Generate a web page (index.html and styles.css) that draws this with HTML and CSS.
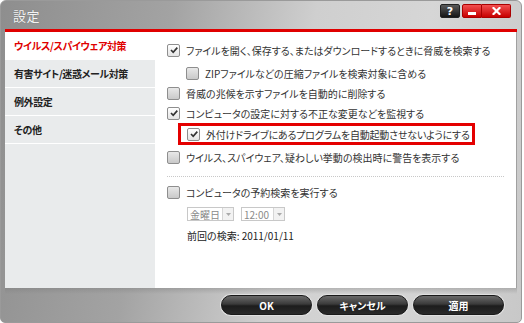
FILE: index.html
```html
<!DOCTYPE html>
<html lang="ja">
<head>
<meta charset="utf-8">
<link rel="stylesheet" href="styles.css">
</head>
<body>
<div class="window">
  <div class="titlebar">
    <span class="title">設定</span>
    <div class="controls">
      <span class="ctl help">?</span>
      <span class="ctl min"><span class="dash"></span></span>
      <span class="ctl close">
        <svg width="9" height="8" viewBox="0 0 9 8"><path d="M1.5 1 L7.5 7 M7.5 1 L1.5 7" stroke="#fff" stroke-width="2.2" stroke-linecap="square"/></svg>
      </span>
    </div>
  </div>
  <div class="redline"></div>
  <div class="main">
    <nav class="sidebar">
      <div class="nav-item active">ウイルス/スパイウェア対策</div>
      <div class="nav-item">有害サイト/迷惑メール対策</div>
      <div class="nav-item">例外設定</div>
      <div class="nav-item">その他</div>
    </nav>
    <section class="content">
      <div class="row r1"><span class="cb checked"><svg width="10" height="10" viewBox="0 0 10 10"><path d="M2 5 L4.2 7.3 L8.3 2.6" fill="none" stroke="#333" stroke-width="1.7"/></svg></span>ファイルを開く、保存する、またはダウンロードするときに脅威を検索する</div>
      <div class="row r2 indent"><span class="cb"></span>ZIPファイルなどの圧縮ファイルを検索対象に含める</div>
      <div class="row r3"><span class="cb"></span>脅威の兆候を示すファイルを自動的に削除する</div>
      <div class="row r4"><span class="cb checked"><svg width="10" height="10" viewBox="0 0 10 10"><path d="M2 5 L4.2 7.3 L8.3 2.6" fill="none" stroke="#333" stroke-width="1.7"/></svg></span>コンピュータの設定に対する不正な変更などを監視する</div>
      <div class="row r5 highlight"><span class="cb checked"><svg width="10" height="10" viewBox="0 0 10 10"><path d="M2 5 L4.2 7.3 L8.3 2.6" fill="none" stroke="#333" stroke-width="1.7"/></svg></span>外付けドライブにあるプログラムを自動起動させないようにする</div>
      <div class="row r6"><span class="cb"></span>ウイルス、スパイウェア、疑わしい挙動の検出時に警告を表示する</div>
      <div class="sep"></div>
      <div class="row r7"><span class="cb"></span>コンピュータの予約検索を実行する</div>
      <div class="selects">
        <span class="select s1"><span class="val">金曜日</span><span class="arrow"><svg width="5" height="3" viewBox="0 0 5 3"><path d="M0 0 H5 L2.5 3 Z" fill="#aaa"/></svg></span></span>
        <span class="select s2"><span class="val">12:00</span><span class="arrow"><svg width="5" height="3" viewBox="0 0 5 3"><path d="M0 0 H5 L2.5 3 Z" fill="#aaa"/></svg></span></span>
      </div>
      <div class="last">前回の検索: 2011/01/11</div>
    </section>
  </div>
  <div class="footer">
    <button class="btn">OK</button>
    <button class="btn">キャンセル</button>
    <button class="btn">適用</button>
  </div>
</div>
</body>
</html>
```

FILE: styles.css
```css
html, body {
  margin: 0;
  padding: 0;
  background: #ffffff;
}
body {
  font-family: "Noto Sans CJK JP", "Noto Sans", sans-serif;
  font-feature-settings: "palt";
}
.window {
  width: 522px;
  height: 323px;
  box-sizing: border-box;
  padding: 0 4px;
  border: 1px solid #9a9a9a;
  border-radius: 6px 6px 5px 5px;
  background: linear-gradient(100deg, #8e8e8e 0%, #a3a3a3 30%, #cfcfcf 55%, #d6d6d6 75%, #c8c8c8 100%);
  display: flex;
  flex-direction: column;
  overflow: hidden;
}
.titlebar {
  height: 28px;
  display: flex;
  align-items: center;
  justify-content: space-between;
}
.title {
  padding-left: 8px;
  font-size: 13px;
  color: #f4f4f4;
  text-shadow: 0 0 1px #666;
  letter-spacing: 0.5px;
}
.controls {
  display: flex;
  align-self: flex-start;
  margin-top: 3px;
  margin-right: 6px;
}
.ctl {
  height: 14px;
  display: flex;
  align-items: center;
  justify-content: center;
  box-sizing: border-box;
  border-radius: 2px;
}
.help {
  width: 20px;
  margin-right: 2px;
  background: linear-gradient(#5a5a5a, #151515);
  color: #fff;
  font-family: "DejaVu Sans", sans-serif;
  font-weight: bold;
  font-size: 11px;
  border: 1px solid #222;
}
.min {
  width: 20px;
  background: linear-gradient(#f25050, #c80000);
  border: 1px solid #a00;
  border-radius: 2px 0 0 2px;
}
.dash {
  width: 8px;
  height: 3px;
  background: #fff;
  margin-top: 4px;
}
.close {
  width: 29px;
  background: linear-gradient(#f25050, #c80000);
  border: 1px solid #a00;
  border-left: none;
  border-radius: 0 2px 2px 0;
}
.redline {
  height: 3px;
  background: #e00000;
}
.main {
  height: 256px;
  display: flex;
}
.sidebar {
  width: 150px;
  background: #e9ebec;
  display: flex;
  flex-direction: column;
}
.nav-item {
  height: 27px;
  border-bottom: 1px solid #ffffff;
  display: flex;
  align-items: center;
  padding-left: 9px;
  font-size: 10px;
  letter-spacing: -0.4px;
  font-weight: bold;
  color: #222;
}
.nav-item.active {
  background: #ffffff;
  color: #e00000;
}
.content {
  flex: 1;
  background: #ffffff;
  padding: 8px 0 0 12px;
  font-size: 10px;
  color: #333;
  border-right: 1px solid #a0a0a0;
}
.row {
  height: 20px;
  display: flex;
  align-items: center;
  white-space: nowrap;
}
.row.indent { padding-left: 19px; margin-top: 3px; }
.row.r5 { padding-left: 6px; letter-spacing: -0.2px; }
.row.r6 { margin-top: 2px; }
.highlight {
  width: 285px;
  height: 16px;
  border: 3px solid #e40000;
  margin-left: 11px;
}
.cb {
  width: 11px;
  height: 11px;
  border: 1px solid #8e8e8e;
  border-radius: 2px;
  background: linear-gradient(#e8e8e8, #c9c9c9);
  margin-right: 6px;
  display: inline-flex;
  align-items: center;
  justify-content: center;
  flex: none;
}
.cb.checked {
  background: linear-gradient(#ffffff, #e4e4e4);
}
.sep {
  margin: 9px 12px 5px 0;
  border-top: 1px dotted #c8c8c8;
}
.selects {
  display: flex;
  gap: 7px;
  padding-left: 20px;
  margin-top: 5px;
}
.select {
  height: 14px;
  box-sizing: border-box;
  border: 1px solid #c8c8c8;
  display: flex;
  align-items: center;
  font-size: 10px;
  color: #8a8a8a;
  white-space: nowrap;
}
.s1 { width: 47px; }
.s2 { width: 44px; }
.select .val {
  flex: 1;
  padding-left: 2px;
  overflow: hidden;
}
.arrow {
  width: 10px;
  height: 12px;
  flex: none;
  border-left: 1px solid #d6d6d6;
  background: #f2f2f2;
  display: flex;
  align-items: center;
  justify-content: center;
}
.last {
  padding-left: 20px;
  margin-top: 7px;
  font-size: 10px;
  color: #222;
}
.footer {
  flex: 1;
  display: flex;
  justify-content: flex-end;
  align-items: flex-start;
  gap: 5px;
  padding: 7px 13px 0 0;
  background: linear-gradient(180deg, rgba(120,120,120,0.35) 0px, rgba(255,255,255,0) 6px);
}
.btn {
  width: 91px;
  height: 20px;
  border-radius: 10px;
  border: 1px solid #1a1a1a;
  background: linear-gradient(#6a6a6a 0%, #3a3a3a 45%, #1c1c1c 55%, #2a2a2a 100%);
  box-shadow: 0 0 0 1px #e0e0e0;
  color: #ffffff;
  font-family: "Noto Sans CJK JP", sans-serif;
  font-feature-settings: "palt";
  font-size: 10px;
  font-weight: bold;
  padding: 0;
}
```
